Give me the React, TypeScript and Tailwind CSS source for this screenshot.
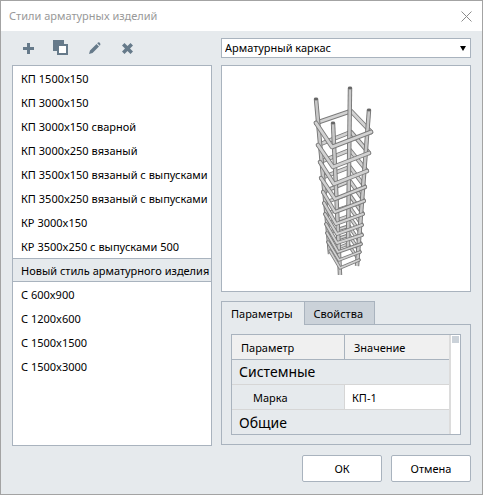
import { useState } from "react";

const styles = [
  "КП 1500x150",
  "КП 3000x150",
  "КП 3000x150 сварной",
  "КП 3000x250 вязаный",
  "КП 3500x150 вязаный с выпусками",
  "КП 3500x250 вязаный с выпусками",
  "КР 3000x150",
  "КР 3500x250 с выпусками 500",
  "Новый стиль арматурного изделия",
  "С 600x900",
  "С 1200x600",
  "С 1500x1500",
  "С 1500x3000",
];

type Point = [number, number];

// Corners of every stirrup, from top to bottom: left, back, right, front.
const rings: [Point, Point, Point, Point][] = [
  [[26, 53], [61, 41], [81, 62], [42, 77]],
  [[28, 75], [61, 62], [79, 83], [43, 97]],
  [[30, 92], [60, 80], [77, 101], [44, 114]],
  [[31, 108], [60, 97], [75, 117], [45, 129]],
  [[33, 122], [60, 111], [74, 131], [45, 142]],
  [[34, 133], [59, 124], [73, 144], [46, 154]],
  [[35, 144], [59, 136], [72, 155], [47, 164]],
  [[36, 154], [59, 146], [72, 165], [47, 173]],
  [[37, 163], [59, 156], [71, 174], [48, 182]],
  [[38, 172], [59, 165], [70, 182], [49, 190]],
  [[40, 181], [58, 174], [69, 190], [50, 198]],
];

function Bar({ points, level }: { points: Point[]; level: number }) {
  const list = points.map((p) => p.join(",")).join(" ");
  const width = 4.6 - level * 0.13;
  return (
    <g fill="none" strokeLinecap="round" strokeLinejoin="round">
      <polyline points={list} stroke="#7c7c7c" strokeWidth={width} />
      <polyline points={list} stroke="#d2d2d2" strokeWidth={width - 1.8} />
    </g>
  );
}

function Rod({ from, to }: { from: Point; to: Point }) {
  return (
    <g>
      <path d={`M${from}L${to}`} stroke="#747474" strokeWidth="4.4" />
      <path d={`M${from}L${to}`} stroke="#c8c8c8" strokeWidth="2.6" />
      <ellipse cx={from[0]} cy={from[1]} rx="2.2" ry="1.4" fill="#666" />
    </g>
  );
}

function Cage() {
  return (
    <svg width="100" height="220" viewBox="0 0 100 220" role="img" aria-label="Арматурный каркас">
      {rings.map((r, i) => (
        <Bar key={i} level={i} points={[r[0], r[1], r[2]]} />
      ))}
      <Rod from={[60, 18]} to={[58, 177]} />
      <Rod from={[26, 29]} to={[40, 184]} />
      <Rod from={[79, 40]} to={[67, 196]} />
      <Rod from={[43, 53]} to={[50, 205]} />
      {rings.map((r, i) => (
        <Bar key={i} level={i} points={[r[0], r[3], r[2]]} />
      ))}
    </svg>
  );
}

export default function App() {
  const [selected, setSelected] = useState(8);
  const [tab, setTab] = useState(0);
  const [mark, setMark] = useState("КП-1");

  return (
    <div className="flex min-h-screen flex-col border border-[#a3a3a3] bg-[#e6eaed] font-['Noto_Sans','Open_Sans',sans-serif] text-[11px] leading-4 text-black">
      <header className="flex h-[30px] items-center justify-between bg-white pr-2.5 pl-2 text-[#999]">
        <h1>Стили арматурных изделий</h1>
        <button type="button" aria-label="Закрыть">
          <svg width="11" height="11" viewBox="0 0 11 11" stroke="#8c8c8c" strokeWidth="1">
            <path d="M.5.5l10 10M10.5.5l-10 10" />
          </svg>
        </button>
      </header>

      <main className="grid grow grid-cols-[minmax(0,200fr)_minmax(0,250fr)] gap-x-[9px] px-[11px] pt-[7px] pb-[11px]">
        <section className="flex flex-col">
          <div className="flex h-[27px] items-start gap-[17px] pl-2 text-[#667a8a]">
            <button type="button" aria-label="Добавить" className="flex h-5 w-4 items-center justify-center">
              <svg width="11" height="11" viewBox="0 0 11 11" className="shrink-0">
                <path d="M4 0h3v4h4v3H7v4H4V7H0V4h4z" fill="currentColor" />
              </svg>
            </button>
            <button type="button" aria-label="Копировать" className="flex h-5 w-4 items-center justify-center">
              <svg width="16" height="16" viewBox="0 0 16 16" className="shrink-0">
                <path d="M0 0h11v11H0z" fill="currentColor" />
                <path d="M5 5h9v9H5z" fill="#fff" stroke="currentColor" strokeWidth="2" />
              </svg>
            </button>
            <button type="button" aria-label="Изменить" className="flex h-5 w-4 items-center justify-end">
              <svg width="13" height="12" viewBox="1 0 13 12" fill="currentColor" className="shrink-0">
                <path d="M1 12l1-3.500L8.500 2l2.500 2.500L4.500 11zM9.200 1.300l.8-.8Q11-.2 11.800.7T12.300 3l-.6.800z" />
              </svg>
            </button>
            <button type="button" aria-label="Удалить" className="flex h-5 w-4 items-center justify-center">
              <svg width="11" height="11" viewBox="0 0 11 11" className="shrink-0">
                <path d="M2.500 0l3 3 3-3L11 2.500l-3 3 3 3L8.500 11l-3-3-3 3L0 8.500l3-3-3-3z" fill="currentColor" />
              </svg>
            </button>
          </div>
          <ul className="h-[381px] overflow-hidden border border-[#a9b3be] bg-white">
            {styles.map((name, i) => (
              <li key={name}>
                <button
                  type="button"
                  aria-pressed={i === selected}
                  onClick={() => setSelected(i)}
                  className={
                    i === selected
                      ? "block h-6 w-full overflow-hidden border-y border-[#a9b3be] bg-[#e6eaed] pt-0.5 pl-2 text-left whitespace-nowrap"
                      : "block h-6 w-full overflow-hidden border-y border-transparent pt-0.5 pl-2 text-left whitespace-nowrap"
                  }
                >
                  {name}
                </button>
              </li>
            ))}
          </ul>
        </section>

        <section className="flex min-w-0 flex-col">
          <div className="relative">
            <select
              aria-label="Тип изделия"
              className="block h-5 w-full appearance-none border border-[#a9b3be] bg-white px-[3px] outline-none"
            >
              <option>Арматурный каркас</option>
            </select>
            <svg width="6" height="5" viewBox="0 0 6 5" className="pointer-events-none absolute top-2 right-[5px]">
              <path d="M0 0h6L3 5z" />
            </svg>
          </div>

          <div className="mt-[7px] flex h-[227px] items-start justify-center border border-[#a9b3be] bg-white pt-1 pr-3">
            <Cage />
          </div>

          <div role="tablist" className="mt-[9px] flex">
            {["Параметры", "Свойства"].map((name, i) => (
              <button
                key={name}
                type="button"
                role="tab"
                aria-selected={i === tab}
                onClick={() => setTab(i)}
                className={
                  i === tab
                    ? "relative z-10 -mb-px h-6 border-x border-t border-[#a9b3be] bg-[#e6eaed] pr-[11px] pl-[9px]"
                    : "h-[23px] border-t border-r border-[#a9b3be] bg-[#cbd2d9] pr-[11px] pl-[9px] pt-0.5"
                }
              >
                {name}
              </button>
            ))}
          </div>
          <div role="tabpanel" className="border border-[#a9b3be] p-[9px]">
            <div className="flex h-[101px] overflow-hidden border border-[#a9b3be]">
              <table className="w-full table-fixed border-separate border-spacing-0 self-start text-left">
                <thead>
                  <tr className="h-[25px] bg-[#f0f0f0]">
                    <th className="w-[113px] border-r border-b border-[#a9b3be] p-0 pt-0.5 pl-[9px] font-normal">Параметр</th>
                    <th className="border-b border-[#a9b3be] p-0 pt-0.5 pl-[9px] font-normal">Значение</th>
                  </tr>
                </thead>
                <tbody>
                  <tr className="h-[25px]">
                    <th colSpan={2} className="border-b border-[#d6d6d6] p-0 pl-[7px] text-sm leading-6 font-normal">
                      Системные
                    </th>
                  </tr>
                  <tr className="h-[25px]">
                    <th className="border-r border-b border-[#d6d6d6] p-0 pt-0.5 pl-[21px] font-normal">
                      <label htmlFor="mark">Марка</label>
                    </th>
                    <td className="border-b border-[#d6d6d6] bg-white p-0">
                      <input
                        id="mark"
                        value={mark}
                        onChange={(e) => setMark(e.target.value)}
                        className="block h-6 w-full pl-[7px] outline-none"
                      />
                    </td>
                  </tr>
                  <tr className="h-[25px]">
                    <th colSpan={2} className="p-0 pl-[7px] text-sm leading-6 font-normal">
                      Общие
                    </th>
                  </tr>
                </tbody>
              </table>
              <div className="w-[11px] shrink-0 border-l-2 border-[#dcdcdc] bg-white pt-px pl-px">
                <div className="size-[7px] bg-[#cbd2d9]" />
              </div>
            </div>
          </div>

          <footer className="mt-[10px] flex justify-end gap-[9px]">
            <button type="button" className="h-[27px] w-20 rounded-xs border border-[#a9b3be] bg-white pt-px">
              ОК
            </button>
            <button type="button" className="h-[27px] w-20 rounded-xs border border-[#a9b3be] bg-white pt-px">
              Отмена
            </button>
          </footer>
        </section>
      </main>
    </div>
  );
}
